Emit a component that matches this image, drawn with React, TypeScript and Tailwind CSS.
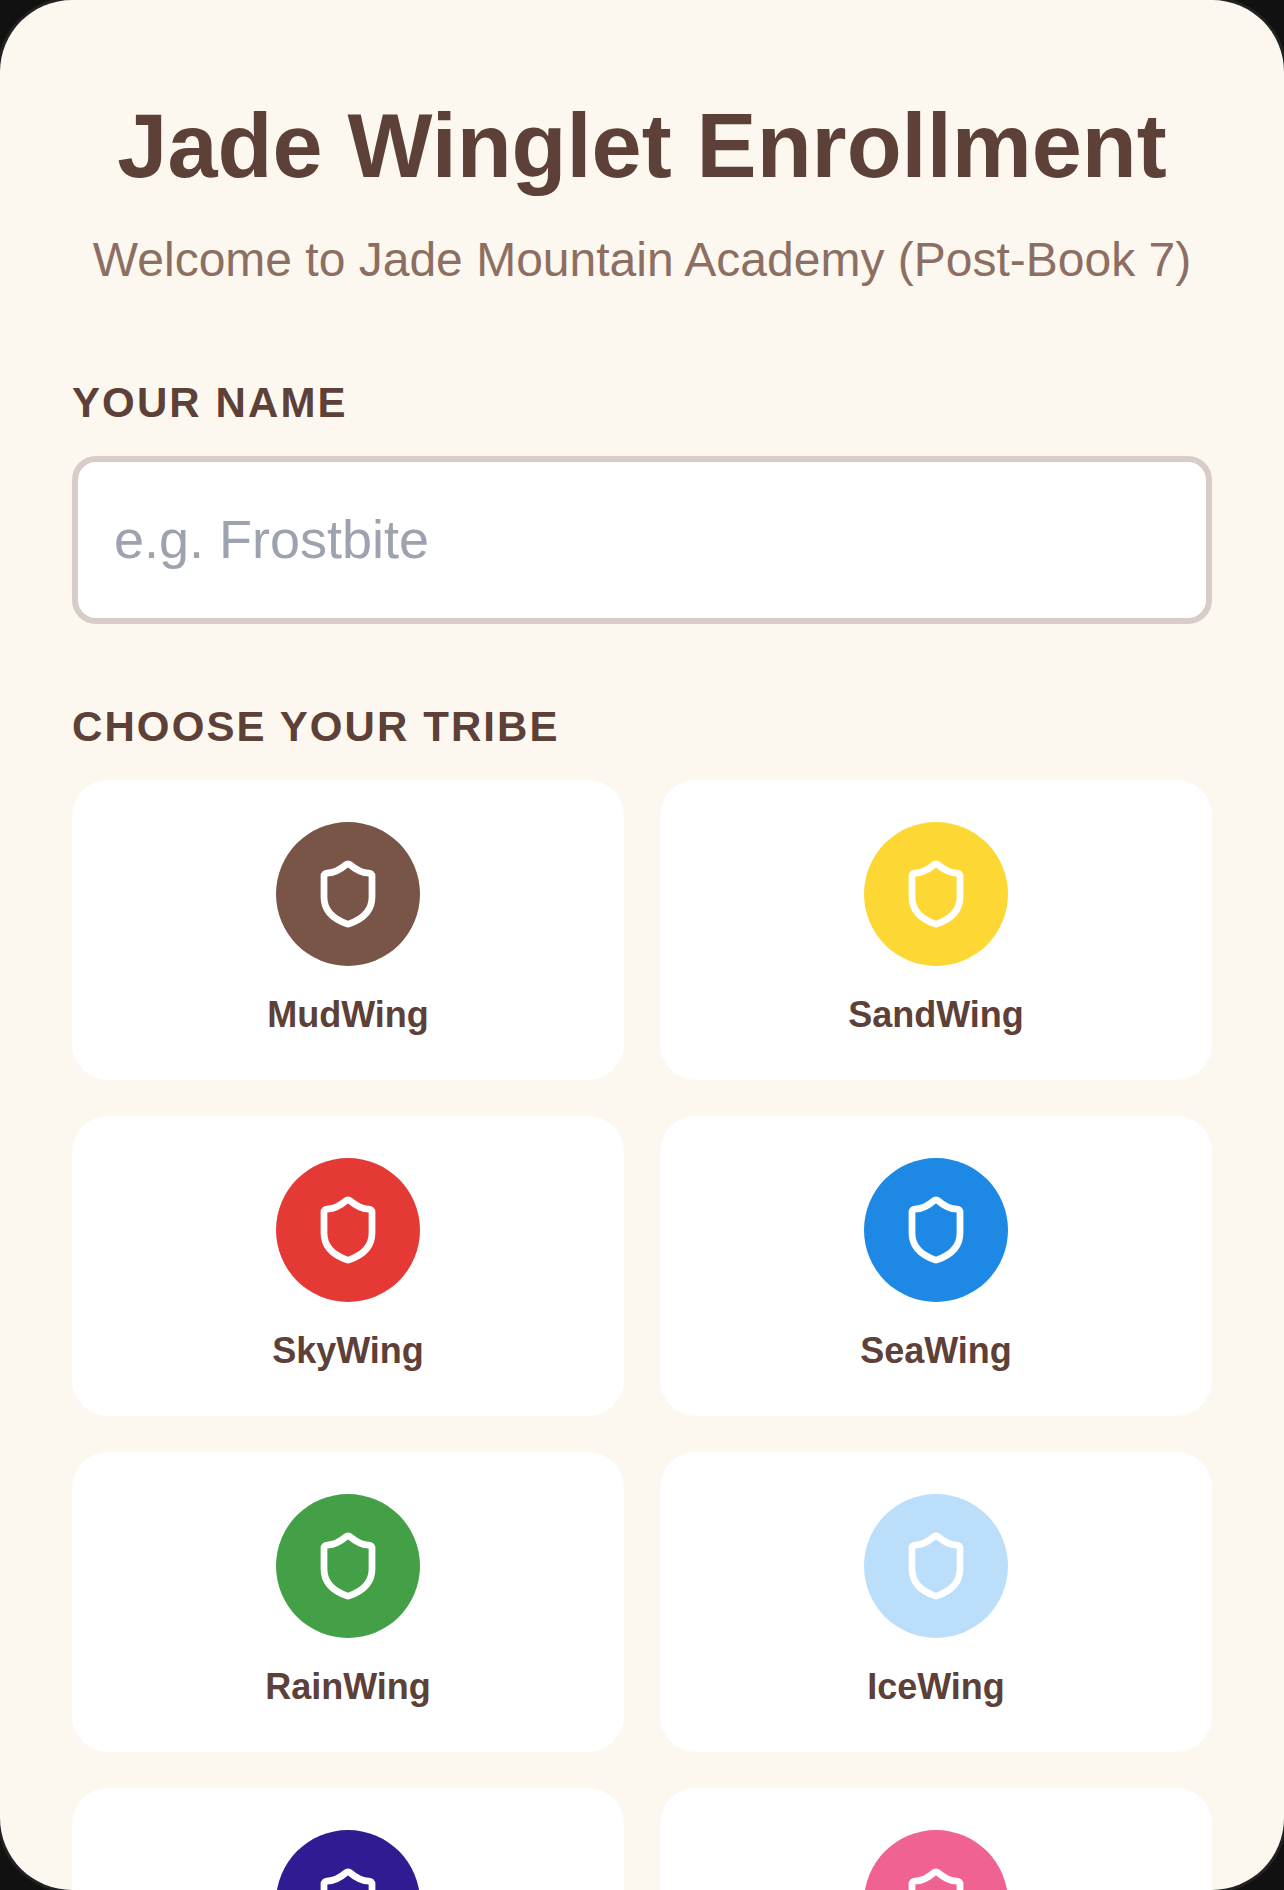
import { Shield } from 'lucide-react'

const tribes = [
  { name: 'MudWing', color: 'bg-[#795548]' },
  { name: 'SandWing', color: 'bg-[#fdd835]' },
  { name: 'SkyWing', color: 'bg-[#e53935]' },
  { name: 'SeaWing', color: 'bg-[#1e88e5]' },
  { name: 'RainWing', color: 'bg-[#43a047]' },
  { name: 'IceWing', color: 'bg-[#bbdefb]' },
  { name: 'NightWing', color: 'bg-[#311b92]' },
  { name: 'SilkWing', color: 'bg-[#f06292]' },
]

export default function App() {
  return (
    <div className="h-[1890px] overflow-hidden bg-[#111111] font-['Liberation_Sans',sans-serif]">
      <div className="h-[1890px] overflow-hidden rounded-[72px] bg-[#fcf8f0] px-[72px] pt-[96px] shadow-[0_0_0_3px_#222222]">
        <h1 className="text-center text-[90px] leading-[100px] font-bold text-[#5d4037]">Jade Winglet Enrollment</h1>
        <p className="mt-[32px] text-center text-[48px] leading-[64px] text-[#8d6e63]">Welcome to Jade Mountain Academy (Post-Book 7)</p>

        <label className="mt-[87px] block text-[42px] leading-[48px] font-bold tracking-[2.1px] text-[#5d4037]">YOUR NAME</label>
        <input
          placeholder="e.g. Frostbite"
          className="mt-[29px] block h-[168px] w-full rounded-[24px] border-[6px] border-[#d7ccc8] bg-white px-[36px] pb-[2px] text-[54px] text-[#5d4037] outline-none placeholder:text-[#9ca3af]"
        />

        <label className="mt-[79px] block text-[42px] leading-[48px] font-bold tracking-[2.1px] text-[#5d4037]">CHOOSE YOUR TRIBE</label>
        <div className="mt-[29px] grid grid-cols-2 gap-[36px]">
          {tribes.map((t) => (
            <div key={t.name} className="flex h-[300px] flex-col items-center rounded-[36px] bg-white pt-[42px]">
              <div className={`flex h-[144px] w-[144px] items-center justify-center rounded-full ${t.color}`}>
                <Shield size={72} color="white" strokeWidth={2.25} />
              </div>
              <span className="mt-[25px] text-[36px] leading-[47px] font-bold text-[#5d4037]">{t.name}</span>
            </div>
          ))}
        </div>
      </div>
    </div>
  )
}
